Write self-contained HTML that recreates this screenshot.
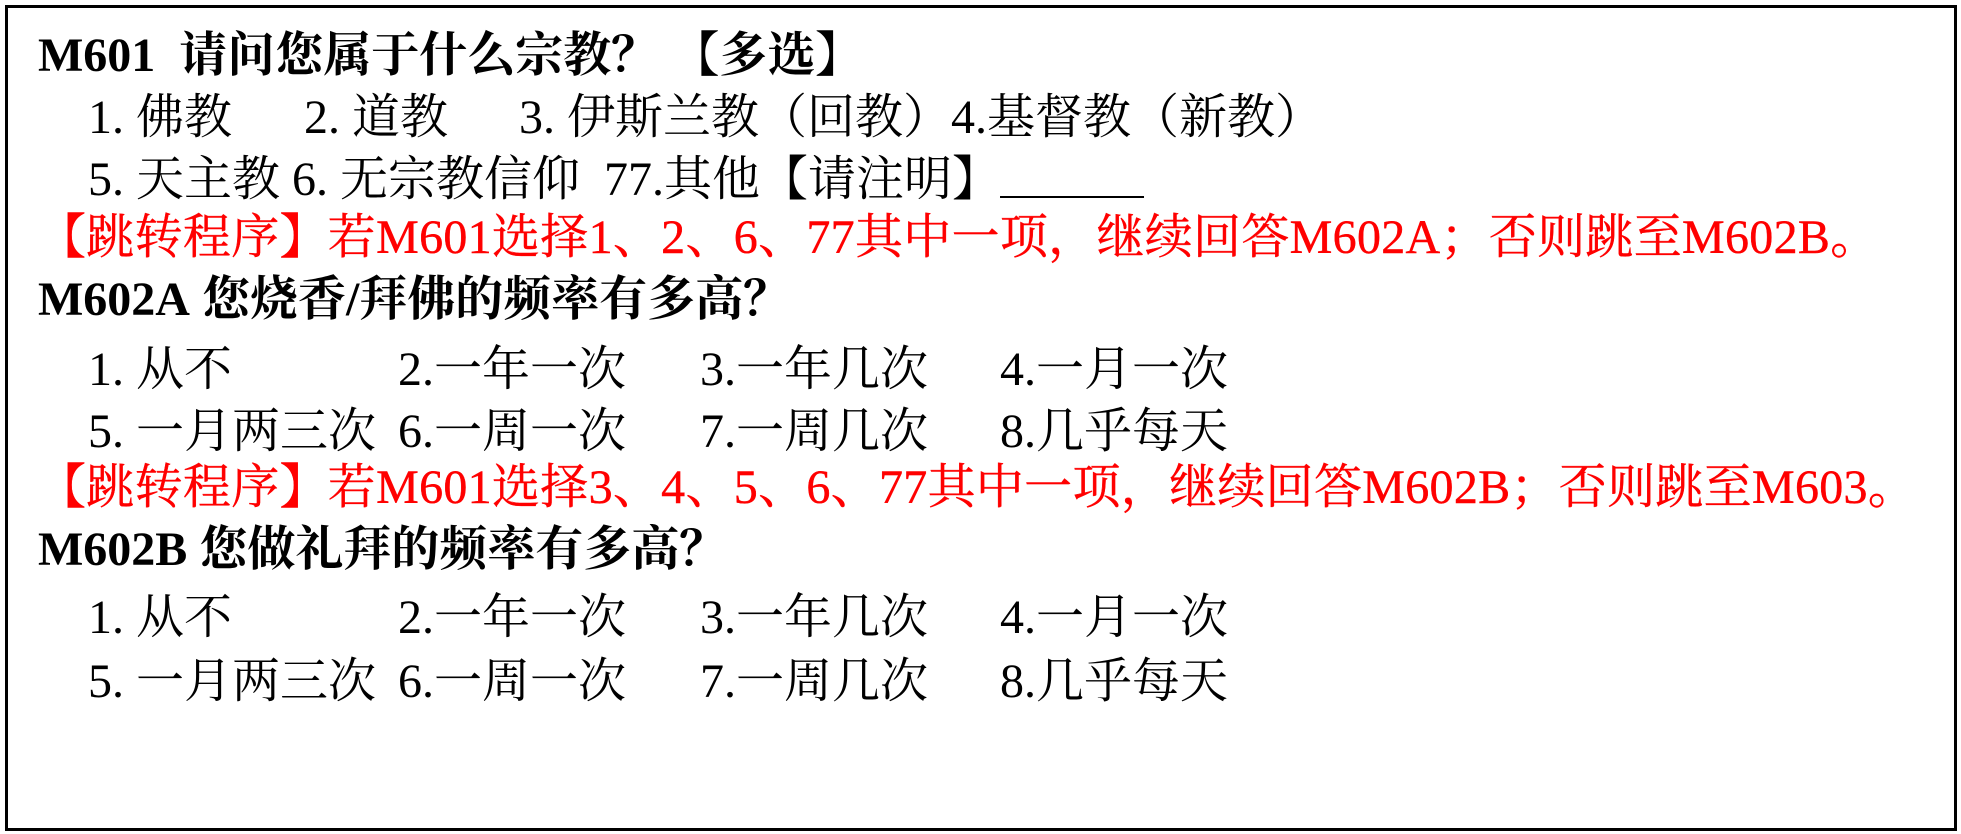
<!DOCTYPE html>
<html><head><meta charset="utf-8"><style>
html,body{margin:0;padding:0;background:#fff;}
body{width:1961px;height:834px;position:relative;overflow:hidden;font-family:"Liberation Serif","Noto Serif CJK SC",serif;font-size:48px;color:#000;}
.box{position:absolute;left:5px;top:5px;width:1946px;height:820px;border:3px solid #000;}
.l{position:absolute;white-space:nowrap;line-height:1;}
b{font-weight:bold;}
.r{color:#f00;letter-spacing:0.3px;-webkit-text-stroke:0.4px #f00;}
</style></head><body>
<div class="box"></div>
<div class="l" style="left:38px;top:32px"><b>M601&nbsp; 请问您属于什么宗教？ 【多选】</b></div>
<div class="l" style="left:88px;top:94px">1. 佛教</div>
<div class="l" style="left:304px;top:94px">2. 道教</div>
<div class="l" style="left:519px;top:94px">3. 伊斯兰教（回教）4.基督教（新教）</div>
<div class="l" style="left:88px;top:156px">5. 天主教 6. 无宗教信仰&nbsp; 77.其他【请注明】<span style="text-decoration:underline;text-decoration-thickness:2px">&nbsp;&nbsp;&nbsp;&nbsp;&nbsp;&nbsp;&nbsp;&nbsp;&nbsp;&nbsp;&nbsp;&nbsp;</span></div>
<div class="l r" style="left:38px;top:214px">【跳转程序】若M601选择1、2、6、77其中一项，继续回答M602A；否则跳至M602B。</div>
<div class="l" style="left:38px;top:276px"><b>M602A</b> <b>您烧香/拜佛的频率有多高？</b></div>
<div class="l" style="left:88px;top:346px">1. 从不</div>
<div class="l" style="left:398px;top:346px">2.一年一次</div>
<div class="l" style="left:700px;top:346px">3.一年几次</div>
<div class="l" style="left:1000px;top:346px">4.一月一次</div>
<div class="l" style="left:88px;top:408px">5. 一月两三次</div>
<div class="l" style="left:398px;top:408px">6.一周一次</div>
<div class="l" style="left:700px;top:408px">7.一周几次</div>
<div class="l" style="left:1000px;top:408px">8.几乎每天</div>
<div class="l r" style="left:38px;top:464px">【跳转程序】若M601选择3、4、5、6、77其中一项，继续回答M602B；否则跳至M603。</div>
<div class="l" style="left:38px;top:526px"><b>M602B</b> <b>您做礼拜的频率有多高？</b></div>
<div class="l" style="left:88px;top:594px">1. 从不</div>
<div class="l" style="left:398px;top:594px">2.一年一次</div>
<div class="l" style="left:700px;top:594px">3.一年几次</div>
<div class="l" style="left:1000px;top:594px">4.一月一次</div>
<div class="l" style="left:88px;top:658px">5. 一月两三次</div>
<div class="l" style="left:398px;top:658px">6.一周一次</div>
<div class="l" style="left:700px;top:658px">7.一周几次</div>
<div class="l" style="left:1000px;top:658px">8.几乎每天</div>
</body></html>
